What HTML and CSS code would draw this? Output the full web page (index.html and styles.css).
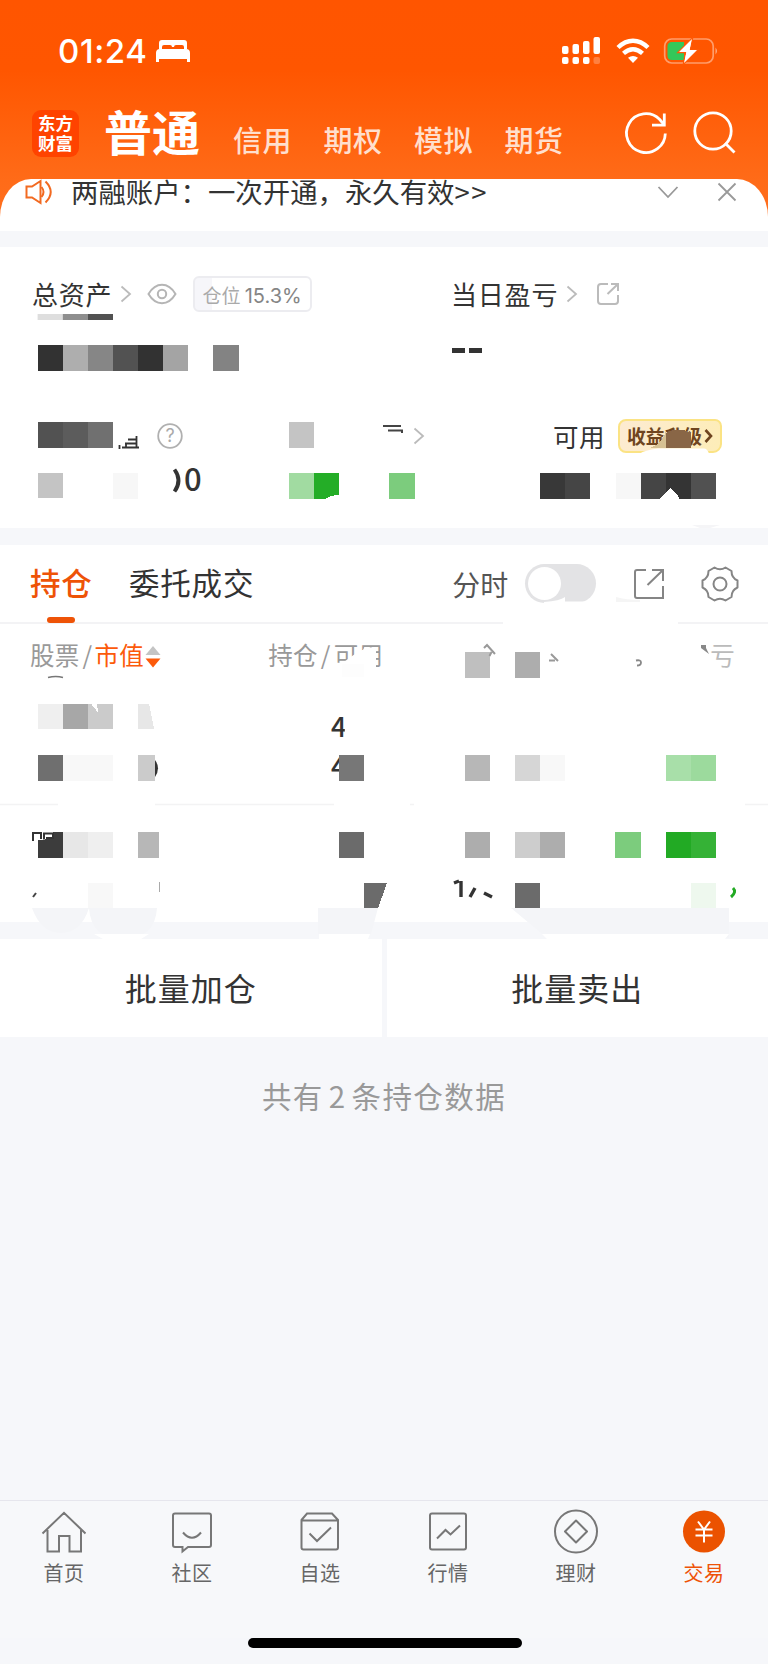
FILE: index.html
```html
<!DOCTYPE html>
<html lang="zh-CN">
<head>
    <meta charset="UTF-8">
    <title>交易</title>
    <link rel="stylesheet" href="styles.css">
</head>
<body>
<div class="page">
    <!--顶部-->
    <div class="top">
        <div class="status">
            <span class="time">01:24</span>
            <svg class="bed" width="34" height="24" viewBox="0 0 34 24" fill="#fff">
                <path d="M3 10V4Q3 1 6 1H28Q31 1 31 4V10H28V8Q28 6 26 6H20Q18 6 18 8H16Q16 6 14 6H8Q6 6 6 8V10Z"/>
                <path d="M0 23V14Q0 10 4 10H30Q34 10 34 14V23H31V20H3V23Z"/>
            </svg>
            <svg class="signal" width="40" height="28" viewBox="0 0 40 28" fill="#fff">
                <rect x="1" y="9" width="6.500" height="8" rx="2"/>
                <rect x="11.500" y="7" width="6.500" height="10" rx="2"/>
                <rect x="22" y="4" width="6.500" height="13" rx="2"/>
                <rect x="32.500" y="0" width="6.500" height="17" rx="2"/>
                <rect x="1" y="20" width="6.500" height="7" rx="2"/>
                <rect x="11.500" y="20" width="6.500" height="7" rx="2"/>
                <rect x="22" y="20" width="6.500" height="7" rx="2"/>
                <rect x="32.500" y="20" width="6.500" height="7" rx="2" opacity=".25"/>
            </svg>
            <svg class="wifi" width="34" height="26" viewBox="0 0 34 26" fill="none" stroke="#fff" stroke-width="4.400">
                <path d="M2 9.500Q9 2.700 17 2.700T32 9.500"/>
                <path d="M7.500 15.300Q12 11.200 17 11.200T26.500 15.300"/>
                <path d="M12 19.800Q17 16 22 19.800L17 25Z" fill="#fff" stroke="none"/>
            </svg>
            <svg class="battery" width="56" height="28" viewBox="0 0 56 28">
                <rect x="1.700" y="2" width="48.500" height="24" rx="7" fill="none" stroke="#fff" stroke-opacity=".42" stroke-width="1.700"/>
                <path d="M52.500 10.500Q55.500 14 52.500 17.500Z" fill="#fff" opacity=".5"/>
                <path d="M9 5H21V23H9Q4.500 23 4.500 18.500V9.500Q4.500 5 9 5Z" fill="#34c759"/>
                <path d="M29.500 1L15 15.500H22.500L20.500 27L35 12.500H27.500Z" fill="#fff" stroke="#ff5a05" stroke-width="1.500"/>
                <path d="M29 2L16 15H23.500L21 26L34 13H26.500Z" fill="#fff"/>
            </svg>
        </div>
        <div class="head">
            <div class="logo">东方<br>财富</div>
            <div class="title">普通</div>
            <div class="types">
                <span>信用</span>
                <span>期权</span>
                <span>模拟</span>
                <span>期货</span>
            </div>
            <svg class="refresh" width="44" height="44" viewBox="0 0 44 44" fill="none" stroke="#fff" stroke-width="2.800">
                <path d="M41.300 22.500A19.400 19.400 0 1 1 35.500 8.300L40 13.500"/>
                <path d="M28 14.200H40.300V2.500"/>
            </svg>
            <svg class="search" width="44" height="44" viewBox="0 0 44 44" fill="none" stroke="#fff" stroke-width="2.800">
                <circle cx="21" cy="20" r="18.200"/>
                <path d="M33 32L42.500 41.500"/>
            </svg>
        </div>
    </div>

    <!--公告-->
    <div class="notice">
        <svg class="horn" width="28" height="26" viewBox="0 0 28 26" fill="none" stroke="#f26a21" stroke-width="2">
            <path d="M1.500 7.500H7L15.500 2V24L7 18.500H1.500Z"/>
            <path d="M16.500 8Q20.500 13 16.500 18M20.500 2.500Q31 13 20.500 23.500"/>
        </svg>
        <div class="notice-text">两融账户：一次开通，永久有效<span>&gt;&gt;</span></div>
        <svg class="down" width="22" height="14" viewBox="0 0 22 14" fill="none" stroke="#999" stroke-width="1.800">
            <path d="M1.500 2L11 12L20.500 2"/>
        </svg>
        <svg class="close" width="20" height="20" viewBox="0 0 20 20" fill="none" stroke="#999" stroke-width="1.800">
            <path d="M1.500 1.500L18.500 18.500M18.500 1.500L1.500 18.500"/>
        </svg>
    </div>

    <!--资产-->
    <div class="assets">
        <div class="line line1">
            <div class="half">
                <span class="name">总资产</span>
                <svg class="more" width="12" height="18" viewBox="0 0 12 18"><path d="M1.500 1.500L10 9L1.500 16.500"/></svg>
                <svg class="eye" width="30" height="22" viewBox="0 0 30 22" fill="none" stroke="#b5b5b5" stroke-width="2">
                    <path d="M1.500 11Q7 1.800 15 1.800T28.500 11Q23 20.200 15 20.200T1.500 11Z"/>
                    <circle cx="15" cy="11" r="4.200"/>
                </svg>
                <span class="tag">仓位 <b>15.3%</b></span>
            </div>
            <div class="half">
                <span class="name">当日盈亏</span>
                <svg class="more" width="12" height="18" viewBox="0 0 12 18"><path d="M1.500 1.500L10 9L1.500 16.500"/></svg>
                <svg class="share" width="24" height="24" viewBox="0 0 24 24" fill="none" stroke="#bbb" stroke-width="2">
                    <path d="M12 2H5Q2 2 2 5V19Q2 22 5 22H19Q22 22 22 19V13M11.500 12L22 2M15 2H22V9"/>
                </svg>
            </div>
        </div>
        <div class="line line2"><i></i><i></i></div>
        <div class="line line3">
            <svg class="help" width="26" height="26" viewBox="0 0 26 26">
                <circle cx="13" cy="13" r="11.800" fill="none" stroke="#b0b0b0" stroke-width="1.800"/>
                <text x="13" y="19" text-anchor="middle">?</text>
            </svg>
            <svg class="more" width="12" height="18" viewBox="0 0 12 18"><path d="M1.500 1.500L10 9L1.500 16.500"/></svg>
            <span class="name usable">可用</span>
            <span class="upgrade">收益升级<svg width="9" height="14" viewBox="0 0 9 14" fill="none" stroke="#6f4520" stroke-width="2.600"><path d="M1.500 1L7 7L1.500 13"/></svg></span>
        </div>
        <!--金额打码-->
        <svg class="mask" width="768" height="281" viewBox="0 247 768 281">
            <path fill="#dedede" d="M37.600 314h25.200v6H37.600z"/>
            <path fill="#8e8e8e" d="M62.800 314H88v6H62.800z"/>
            <path fill="#525252" d="M88 314h25v6H88z"/>
            <g class="cells">
                <path fill="#323232" d="M37.600 345h25.200v26H37.600zM138 345h25.200v26H138z"/>
                <path fill="#aeaeae" d="M62.800 345H88v26H62.800z"/>
                <path fill="#868686" d="M88 345h25v26H88z"/>
                <path fill="#525252" d="M113 345h25v26h-25z"/>
                <path fill="#a4a4a4" d="M163.200 345h25.200v26h-25.200z"/>
                <path fill="#838383" d="M213.400 345h25.400v26h-25.400z"/>
                <path fill="#525252" d="M37.600 422h25.200v26H37.600z"/>
                <path fill="#5c5c5c" d="M62.800 422H88v26H62.800z"/>
                <path fill="#707070" d="M88 422h25v26H88z"/>
                <path fill="#c4c4c4" d="M289 422h25.200v26H289zM37.600 473h25.200v24.500H37.600z"/>
                <path fill="#f7f7f7" d="M113 473h25v26h-25zM615.600 473h25.200v26h-25.200z"/>
                <path fill="#a1dba1" d="M289 473h25.200v26H289z"/>
                <path fill="#24ad27" d="M314.200 473H339v22.500q-6-1-14 3.500h-10.800z"/>
                <path fill="#7ccc7d" d="M389.200 473h25.400v26h-25.400z"/>
                <path fill="#383838" d="M540 473h25.400v26H540z"/>
                <path fill="#454545" d="M565.400 473h25v26h-25zM640.800 473H666v19l-6.500 7h-18.700z"/>
                <path fill="#343434" d="M666 473h25v26h-12q-1-5-4-6l-5-5-4 4z"/>
                <path fill="#515151" d="M691 473h25.200v26H691z"/>
                <path fill="#d6c193" d="M650 448q13-5 16-17v17z"/>
                <path fill="#896646" d="M666 433q12-7 25 0v15h-25z"/>
            </g>
            <!--标签下沿被擦掉的部分-->
            <path fill="#fff" d="M640 453.500q4-3 18-5h46q3 0 5 5z"/>
            <path d="M119.500 445v4M122 447.500h17M125 443.500h12M128 439.500h8M136.500 436v11M126 443v5" fill="none" stroke="#333" stroke-width="1.800"/>
            <path d="M383 426h18M388 430.500h14v2.500" fill="none" stroke="#444" stroke-width="2"/>
            <text class="num" x="184" y="491">0</text>
            <path d="M174.500 469.500q8 11 0 22" fill="none" stroke="#333" stroke-width="3.800"/>
            <path d="M692 525h28l-10 3h-10z" fill="#f5f5f7"/>
        </svg>
    </div>

    <!--持仓-->
    <div class="holding">
        <div class="tabs">
            <span class="tab current">持仓</span>
            <span class="tab">委托成交</span>
            <span class="minute">分时</span>
            <span class="switch"><i></i></span>
            <svg class="share2" width="32" height="32" viewBox="0 0 32 32" fill="none" stroke="#858585" stroke-width="2">
                <path d="M13 2H4Q2 2 2 4V28Q2 30 4 30H30V18M14.500 17L30 2M19 2H30V13"/>
            </svg>
            <svg class="gear" width="38" height="36" viewBox="0 0 38 36" fill="none" stroke="#858585" stroke-width="2">
                <path d="M13.500 1.500Q19 5 24.500 1.500L30.500 5Q30.500 12 36.500 14.500V21.500Q30.500 24 30.500 31L24.500 34.500Q19 31 13.500 34.500L7.500 31Q7.500 24 1.500 21.500V14.500Q7.500 12 7.500 5Z" stroke-linejoin="round"/>
                <circle cx="19" cy="18" r="6.500"/>
            </svg>
        </div>
        <div class="thead">
            <span>股票<s>/</s><em>市值</em></span>
            <svg class="sort" width="16" height="22" viewBox="0 0 16 22">
                <path d="M8 0L15.500 9H.5Z" fill="#c4c4c4"/>
                <path d="M8 21.500L15.500 12.500H.5Z" fill="#fc5a0a"/>
            </svg>
            <span class="col2">持仓<s>/</s>可用</span>
            <span class="col4">亏</span>
        </div>
        <!--持仓打码-->
        <svg class="mask" width="768" height="394" viewBox="0 545 768 394">
            <path fill="#fff" d="M544 602q16-1 21-5v4.500h25v3h-46z"/>
            <path fill="#f5f5f5" d="M616 597q10 3 24 3v2h-24z"/>
            <path fill="#fff" d="M503 622h175v3H503z"/>
            <path fill="#fff" d="M341 664l14-10 7-4h2v-2.500h10l-8 8-2 15h-23zM364 648l12-1v24h-24z"/>
            <path fill="#fdfdfd" d="M342 664h22v13h-22z"/>
            <path fill="#fff" d="M695 666h9v-26h-9z"/>
            <path d="M48 677.500q8-2 15 0" fill="none" stroke="#777" stroke-width="1.500"/>
            <path d="M0 804.500h58M155 804.500h179M410 804.500h4M745 804.500h23" stroke="#f3f3f4" stroke-width="1.500"/>
            <text class="qty" x="331" y="737">4</text>
            <text class="qty" x="331" y="777">4</text>
            <path fill="#fff" d="M344.800 710h8v30h-8z"/>
            <path d="M155 760q6 8 0 17z" fill="#333"/>
            <g class="cells">
                <path fill="#bfbfbf" d="M464.800 652H490v26h-25.200z"/>
                <path fill="#adadad" d="M515 652h25.200v26H515z"/>
                <path fill="#efefef" d="M37.600 703.600h25.200V729H37.600zM88 831.800h25v26H88z"/>
                <path fill="#a7a7a7" d="M62.800 703.600H88V729H62.800z"/>
                <path fill="#cbcbcb" d="M88 703.600h3l7 9-1-9h16V729H88zM138 755h17v25.500h-17z"/>
                <path fill="#e7e7e7" d="M138 703.600h11l5 25.400h-16zM62.800 831.800H88v26H62.800z"/>
                <path fill="#6f6f6f" d="M37.600 755h25.200v25.500H37.600z"/>
                <path fill="#f8f8f8" d="M62.800 755H113v25.500H62.800zM540.200 755h25v25.500h-25zM88 883h25v26H88z"/>
                <path fill="#777" d="M339 755h25.200v25.500H339z"/>
                <path fill="#b7b7b7" d="M464.800 755H490v25.500h-25.200zM138 831.800h20.500l.5 26h-21z"/>
                <path fill="#d6d6d6" d="M515 755h25.200v25.500H515z"/>
                <path fill="#a8dfa9" d="M665.600 755H691v25.500h-25.400z"/>
                <path fill="#9cda9d" d="M691 755h25.200v25.500H691z"/>
                <path fill="#3c3c3c" d="M37.600 840l15-1 1-7.200h9.200v26H37.600z"/>
                <path fill="#6b6b6b" d="M339 831.800h25.200v26H339zM364.200 883H387l-9 25.400h-13.800zM515 883h25.200v25.400H515z"/>
                <path fill="#adadad" d="M464.800 831.800H490v26h-25.200zM540.200 831.800h25.200v26h-25.200z"/>
                <path fill="#cdcdcd" d="M515 831.800h25.200v26H515z"/>
                <path fill="#7ccc7d" d="M615.400 831.800h25.400v26h-25.400z"/>
                <path fill="#22aa24" d="M665.600 831.800H691v26h-25.400z"/>
                <path fill="#35b236" d="M691 831.800h25.200v26H691z"/>
                <path fill="#eef8ee" d="M691 883h25.200v26H691z"/>
            </g>
            <path d="M33 841v-8h8v6M44 839.500v-6h9v4.500h-7" fill="none" stroke="#333" stroke-width="2"/>
            <path d="M484 648l3-3 8 9M489.500 656l2-4M549 660.500h6M551 654l7 7" fill="none" stroke="#999" stroke-width="2"/>
            <path d="M636 660.500q5-1 5 2t-4 3" fill="none" stroke="#888" stroke-width="1.800"/>
            <path d="M701 645h5v3l3 6-8-6z" fill="#888"/>
            <path d="M33 897l3-4" stroke="#444" stroke-width="2"/>
            <path d="M159.500 882v10" stroke="#aaa"/>
            <path d="M454 883l5-2M461 881v16M470 897l5-9M484 893l8 4" fill="none" stroke="#333" stroke-width="3.400"/>
            <path d="M733 888q4 4-2 9" fill="none" stroke="#22aa24" stroke-width="3"/>
            <g fill="#f4f5f8">
                <path d="M32 908h57q-8 25-28 25t-29-25zM89 908h68q-2 31-34 31t-34-31zM318 908h60l-7 26h-53zM511 908h218v30H547z"/>
            </g>
            <path fill="#fff" d="M94 934h55l-8 5h-38zM319 934h51l-2 5h-49zM542 934h187l-4 5H547z"/>
        </svg>
    </div>

    <div class="batch">
        <div class="btn">批量加仓</div>
        <div class="btn">批量卖出</div>
    </div>
    <div class="total">共有<span>2</span>条持仓数据</div>

    <!--底部导航-->
    <div class="nav">
        <div class="item">
            <svg width="46" height="46" viewBox="0 0 46 46">
                <path d="M1.500 22.500L23 1.800L44.500 22.500M6.500 19V40.500H18V25H28.500V40.500H40V19"/>
            </svg>
            <span>首页</span>
        </div>
        <div class="item">
            <svg width="46" height="46" viewBox="0 0 46 46">
                <path d="M6 2.500H40Q42 2.500 42 4.500V34Q42 36 40 36H19L13.500 40.500V36H6Q4 36 4 34V4.500Q4 2.500 6 2.500ZM14 21.500Q23 32 32 21.500"/>
            </svg>
            <span>社区</span>
        </div>
        <div class="item">
            <svg width="46" height="46" viewBox="0 0 46 46">
                <path d="M4.500 9L10 2.500H35L41 9V36.500Q41 38.500 39 38.500H6.500Q4.500 38.500 4.500 36.500ZM4.500 9.500H41M12.500 22.500L20 30L34 16.500"/>
            </svg>
            <span>自选</span>
        </div>
        <div class="item">
            <svg width="46" height="46" viewBox="0 0 46 46">
                <rect x="5" y="2.500" width="36" height="36" rx="2"/>
                <path d="M12 27.500L20.500 19L25.500 23.500L35 14.500"/>
            </svg>
            <span>行情</span>
        </div>
        <div class="item">
            <svg width="46" height="46" viewBox="0 0 46 46">
                <circle cx="23" cy="20.500" r="21"/>
                <path d="M23 9.500L34 20.500L23 31.500L12 20.500Z" stroke-linejoin="round"/>
            </svg>
            <span>理财</span>
        </div>
        <div class="item current">
            <svg width="46" height="46" viewBox="0 0 46 46">
                <circle class="coin" cx="23" cy="20.500" r="21"/>
                <path class="yen" d="M17 10.500L23 18.500L29 10.500M14.500 18.500H31.500M14.500 24.500H31.500M23 18.500V31.500"/>
            </svg>
            <span>交易</span>
        </div>
    </div>
    <div class="home-bar"></div>
</div>
</body>
</html>
```
FILE: styles.css
```css
*{
    margin: 0;
    padding: 0;
    box-sizing: border-box;
}
body{
    background-color: #f6f7fa;
    font-family: "Liberation Sans", "Noto Sans CJK SC", sans-serif;
    color: #333;
}
i,em{
    font-style: normal;
}
svg{
    display: block;
    flex: none;
    overflow: visible;
}
.page{
    width: 768px;
    height: 1664px;
    display: flex;
    flex-direction: column;
    background: #f6f7fa linear-gradient(#ff5500 0, #ff5600 70px, #ff6b18 180px, #ff7020 225px) no-repeat;
    background-size: 100% 225px;
    overflow: hidden;
    white-space: nowrap;
}

/*顶部*/
.top{
    height: 179px;
}
.status{
    height: 102px;
    display: flex;
    align-items: center;
    padding-left: 58px;
    color: #fff;
}
.time{
    width: 98px;
    font: 500 33px/40px Inter, sans-serif;
    letter-spacing: .6px;
}
.signal{
    margin-left: 371px;
    margin-top: -1px;
}
.wifi{
    margin-left: 15px;
}
.battery{
    margin-left: 13px;
}
.head{
    height: 77px;
    display: flex;
    align-items: flex-start;
    padding-left: 32px;
    font-family: "Noto Sans CJK SC", sans-serif;
    color: #fff;
}
.logo{
    width: 47px;
    height: 47px;
    margin-top: 8px;
    padding-top: 3px;
    border-radius: 9px;
    background-color: #ff4300;
    font-size: 17.500px;
    line-height: 20px;
    font-weight: 700;
    text-align: center;
}
.title{
    width: 129px;
    margin-left: 25px;
    font-size: 48px;
    line-height: 56px;
    font-weight: 700;
    letter-spacing: 0;
}
.types{
    display: flex;
    gap: 31.500px;
    margin-top: 19px;
    font-size: 29px;
    line-height: 36px;
    font-weight: 500;
    color: #ffdfcd;
}
.types span{
    width: 59px;
    letter-spacing: .5px;
}
.refresh{
    margin: 9px 0 0 60px;
}
.search{
    margin: 9px 0 0 24px;
}

/*公告*/
.notice{
    height: 52px;
    display: flex;
    align-items: flex-start;
    padding-left: 25px;
    border-radius: 31px 31px 0 0 / 38px 38px 0 0;
    background-color: #fff;
    overflow: hidden;
}
.notice-text{
    width: 586px;
    margin-left: 18px;
    margin-top: -1px;
    font: 27.400px/26px "Noto Sans CJK SC", sans-serif;
}
.notice-text span{
    letter-spacing: 1.600px;
}
.down{
    margin-top: 6px;
}
.close{
    margin: 3px 0 0 38px;
}

/*资产*/
.assets{
    position: relative;
    height: 281px;
    margin-top: 16px;
    background-color: #fff;
    font-family: "Noto Sans CJK SC", sans-serif;
}
.line{
    display: flex;
    align-items: center;
}
.line1{
    height: 94px;
    padding-left: 32px;
}
.half{
    flex: none;
    width: 419px;
    display: flex;
    align-items: center;
}
.half + .half{
    width: auto;
}
.name{
    font-size: 26px;
    line-height: 36px;
    letter-spacing: .8px;
    margin-top: -1px;
}
.more{
    fill: none;
    stroke: #bbb;
    stroke-width: 1.800;
    margin-left: 8px;
}
.eye{
    margin-left: 15px;
}
.tag{
    width: 119px;
    height: 36px;
    margin-left: 16px;
    padding-left: 7px;
    border: 2px solid #ececf0;
    border-radius: 6px;
    background: linear-gradient(90deg, #f6f6fa 17px, #fff 17px);
    font-size: 19px;
    line-height: 33px;
    color: #aaa;
}
.tag b{
    font: 400 20px/32px Inter, sans-serif;
    color: #858585;
}
.share{
    margin-left: 18px;
}
.line2{
    height: 19px;
    padding-left: 452px;
    gap: 4px;
}
.line2 i{
    width: 13px;
    height: 5px;
    background-color: #333;
}
.line3{
    height: 154px;
    padding-left: 157px;
    padding-bottom: 2px;
}
.help text{
    font: 18px Inter, sans-serif;
    fill: #aaa;
}
.line3 .more{
    margin-left: 230px;
}
.usable{
    margin-left: 128px;
    font-size: 25.500px;
    letter-spacing: .5px;
}
.upgrade{
    width: 104px;
    height: 34px;
    display: flex;
    align-items: center;
    gap: 2px;
    margin-left: 13px;
    padding-left: 7px;
    border: 2px solid #fbe384;
    border-radius: 8px 7px 9px 8px;
    background: linear-gradient(100deg, #fdebd2, #fdedb8);
    font-size: 18.800px;
    line-height: 26px;
    font-weight: 700;
    color: #6f4520;
}
.mask{
    position: absolute;
    left: 0;
    top: 0;
}
.cells{
    shape-rendering: crispEdges;
}
.num{
    font: 500 31px "Noto Sans CJK SC", sans-serif;
    fill: #333;
}
.qty{
    font: 500 27px "Noto Sans CJK SC", sans-serif;
    fill: #333;
}

/*持仓*/
.holding{
    position: relative;
    height: 377px;
    margin-top: 17px;
    background-color: #fff;
    font-family: "Noto Sans CJK SC", sans-serif;
}
.tabs{
    height: 79px;
    display: flex;
    align-items: center;
    padding-left: 30px;
    border-bottom: 2px solid #f3f3f5;
    font-size: 30.500px;
}
.tab{
    height: 79px;
    line-height: 77px;
    letter-spacing: .8px;
}
.tab.current{
    position: relative;
    width: 99px;
    font-weight: 500;
    color: #ee5307;
}
.tab.current::after{
    content: "";
    position: absolute;
    left: 17px;
    bottom: 0;
    width: 28px;
    height: 6px;
    border-radius: 3px;
    background-color: #ee5307;
}
.minute{
    width: 73px;
    margin-left: 198px;
    font-size: 28px;
    line-height: 76px;
    color: #555;
}
.switch{
    width: 71px;
    height: 39px;
    padding: 3px;
    border-radius: 20px;
    background-color: #e3e3e5;
}
.switch i{
    display: block;
    width: 33px;
    height: 33px;
    border-radius: 50%;
    background-color: #fff;
}
.share2{
    margin-left: 37px;
}
.gear{
    margin-left: 36px;
}
.thead{
    height: 64px;
    display: flex;
    align-items: center;
    padding-left: 30px;
    padding-bottom: 2px;
    font-size: 24.500px;
    line-height: 36px;
    color: #999;
    letter-spacing: .3px;
}
.thead s{
    margin-left: 3px;
    text-decoration: none;
}
.thead em{
    margin-left: 2px;
    color: #fc5a0a;
}
.sort{
    margin-left: 1px;
    margin-top: 3px;
}
.col2{
    width: 442px;
    margin-left: 107px;
}
.thead .col2 s{
    margin-right: 3px;
}
.col4{
    color: #bbb;
}

/*批量操作*/
.batch{
    display: flex;
    gap: 5px;
    margin-top: 17px;
}
.btn{
    flex: 1;
    height: 98px;
    background-color: #fff;
    font: 32px/96px "Noto Sans CJK SC", sans-serif;
    letter-spacing: 1px;
    text-align: center;
}
.total{
    margin-top: 36px;
    font: 29.500px/44px "Noto Sans CJK SC", sans-serif;
    letter-spacing: 1.400px;
    text-align: center;
    color: #999;
}
.total span{
    margin: 0 5px;
}

/*底部导航*/
.nav{
    height: 138px;
    display: flex;
    margin-top: auto;
    border-top: 1px solid #e6e6ed;
    background-color: #f7f8fa;
}
.item{
    flex: 1;
    display: flex;
    flex-direction: column;
    align-items: center;
    padding-top: 10px;
    font: 20px/31px "Noto Sans CJK SC", sans-serif;
    letter-spacing: .5px;
    color: #666;
}
.item svg{
    fill: none;
    stroke: #777;
    stroke-width: 2;
}
.item.current{
    color: #ee5307;
}
.item .coin{
    fill: #eb5200;
    stroke: none;
}
.item .yen{
    stroke: #fff;
}
.home-bar{
    width: 274px;
    height: 10px;
    margin: 0 auto 16px;
    border-radius: 5px;
    background-color: #000;
    transform: translateX(1px);
}
```
